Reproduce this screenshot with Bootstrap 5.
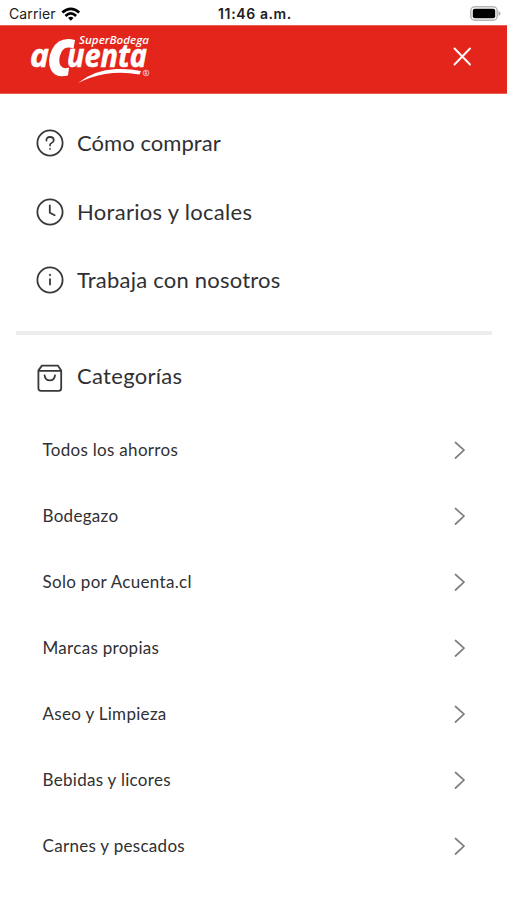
<!DOCTYPE html>
<html lang="es">
<head>
<meta charset="utf-8">
<meta name="viewport" content="width=device-width, initial-scale=1">
<title>aCuenta</title>
<link href="https://cdn.jsdelivr.net/npm/bootstrap@5.3.0/dist/css/bootstrap.min.css" rel="stylesheet">
<style>
body{font-family:Lato,"Noto Sans",sans-serif;color:#303033;background:#fff;height:900px;overflow:hidden}
svg{display:block;flex:none}
.status-bar{height:25px;font-family:Inter,"Liberation Sans",sans-serif;color:#202020;line-height:27px;padding:0 6px 0 9px;display:grid!important;grid-template-columns:1fr auto 1fr}
.carrier{font-size:14px;letter-spacing:.1px}
.clock{font-size:14px;font-weight:600;letter-spacing:.62px}
.brand-bar{height:69px;background:#e3251b;border-top:1px solid #ea5c54;border-bottom:1px solid #ea5c54;padding:0 34px 5px 28px}
.help-list{padding:15px 0 0 36px}
.help-row{height:68.5px}
.help-row,.cat-head{gap:13px;font-size:22px;line-height:30px}
.divider{height:4px;background:#ededed;margin:16px 15px 0 16px}
.cat-head{height:68px;margin:9px 0 -1px 36px}
.cat-head span{position:relative;top:-2px}
.cat-list{padding:6px 41.5px 0 42.5px}
.cat-row{height:66px;font-size:17px;letter-spacing:.3px}
.stroke{fill:none;stroke:#38383b;stroke-width:1.8;stroke-linecap:round;stroke-linejoin:round}
.chev{fill:none;stroke:#808083;stroke-width:1.7;stroke-linecap:round;stroke-linejoin:round}
</style>
<script src="https://cdn.jsdelivr.net/npm/bootstrap@5.3.0/dist/js/bootstrap.bundle.min.js"></script>
</head>
<body>
<div class="status-bar">
  <div class="d-flex align-items-center carrier"><span>Carrier</span>
    <svg class="ms-1" width="21" height="16" viewBox="0 0 21 16"><g transform="translate(1 1)" fill="none" stroke="#000" stroke-width="2.7"><path d="M1.4 5.6Q9.8-2 18.2 5.6"/><path d="M4.5 8.9Q9.8 4 15.1 8.9"/><path d="M7.1 11.1Q9.8 8.6 12.5 11.1L9.8 13.7Z" fill="#000" stroke="none"/></g></svg></div>
  <div class="clock">11:46 a.m.</div>
  <div class="d-flex align-items-center justify-content-end">
    <svg width="31" height="15" viewBox="0 0 31 15"><rect x=".8" y=".8" width="26.4" height="13.4" rx="4" fill="#fff" stroke="#b5b5b5" stroke-width="1.5"/><rect x="2.8" y="2.8" width="22.4" height="9.4" rx="2" fill="#000"/><path d="M28.5 5q2 .6 2 2.5t-2 2.5z" fill="#aaa"/></svg></div>
</div>
<header class="brand-bar d-flex align-items-center justify-content-between">
  <svg width="124" height="56" viewBox="28 29 124 56" fill="#fff" font-family="'Open Sans','Noto Sans',sans-serif" font-weight="700" font-style="italic">
    <text x="79" y="43.5" font-size="10.5" font-weight="600" textLength="70" lengthAdjust="spacingAndGlyphs">SuperBodega</text>
    <text x="30" y="67" font-size="32" font-weight="700" stroke="#fff" stroke-width=".5" textLength="19" lengthAdjust="spacingAndGlyphs">a</text>
    <path d="M75 40L73.500 48.500Q65 45.500 61.500 52Q57.500 60 60.500 65.500Q63 69.500 69 67.500L68 75.500Q56 78.500 51 70Q46.500 61 52 49.500Q59 36 75 40Z"/>
    <text x="67" y="67" font-size="32" font-weight="700" stroke="#fff" stroke-width=".6" textLength="80" lengthAdjust="spacingAndGlyphs">uenta</text>
    <path d="M78 83Q94 70 116 69Q130 68.500 141 71L139.500 74.500Q122 71.500 105 74Q91 76.500 78 83Z"/>
    <circle cx="146" cy="73" r="2.9" fill="none" stroke="#fff" stroke-width=".6"/>
    <text x="144.500" y="74.800" font-size="4.6" font-style="normal" font-weight="400">R</text>
  </svg>
  <svg width="22" height="22" viewBox="0 0 22 22"><path d="M3.500 2.500L19 18.500M19 2.500L3.500 18.500" stroke="#fff" stroke-width="1.9" stroke-linecap="round"/></svg>
</header>
<nav class="help-list">
  <div class="help-row d-flex align-items-center"><svg class="stroke" width="28" height="28" viewBox="0 0 28 28"><circle cx="14" cy="14" r="12.6"/><path d="M10.4 11.6Q10.3 8 14 8T17.7 11.2Q17.7 13.2 15.5 14Q14 14.500 14 16.4"/><circle cx="14" cy="20" r=".25"/></svg><span style="letter-spacing:.05px">Cómo comprar</span></div>
  <div class="help-row d-flex align-items-center"><svg class="stroke" width="28" height="28" viewBox="0 0 28 28"><circle cx="14" cy="14" r="12.6"/><path d="M13.8 7.500V14.700L18.700 17.2"/></svg><span style="letter-spacing:.3px">Horarios y locales</span></div>
  <div class="help-row d-flex align-items-center"><svg class="stroke" width="28" height="28" viewBox="0 0 28 28"><circle cx="14" cy="14" r="12.6"/><path d="M14 13.2V18.6"/><circle cx="14" cy="9" r=".3"/></svg><span style="letter-spacing:.22px">Trabaja con nosotros</span></div>
</nav>
<div class="divider"></div>
<div class="cat-head d-flex align-items-center"><svg class="stroke" width="28" height="28" viewBox="0 0 28 28"><path d="M2.4 6.4L6 1.6H21.8L25.2 6.4V24.2Q25.2 26.8 22.6 26.8H5Q2.4 26.8 2.4 24.2ZM2.4 6.8H25.2M8.6 11.3Q9.2 16.3 13.8 16.3T19 11.3"/></svg><span style="letter-spacing:.3px">Categorías</span></div>
<div class="cat-list">
  <div class="cat-row d-flex align-items-center justify-content-between"><span>Todos los ahorros</span><svg class="chev" width="12" height="18" viewBox="0 0 12 18"><path d="M1.500 1.500L10 9.2L1.500 17"/></svg></div>
  <div class="cat-row d-flex align-items-center justify-content-between"><span>Bodegazo</span><svg class="chev" width="12" height="18" viewBox="0 0 12 18"><path d="M1.500 1.500L10 9.2L1.500 17"/></svg></div>
  <div class="cat-row d-flex align-items-center justify-content-between"><span>Solo por Acuenta.cl</span><svg class="chev" width="12" height="18" viewBox="0 0 12 18"><path d="M1.500 1.500L10 9.2L1.500 17"/></svg></div>
  <div class="cat-row d-flex align-items-center justify-content-between"><span>Marcas propias</span><svg class="chev" width="12" height="18" viewBox="0 0 12 18"><path d="M1.500 1.500L10 9.2L1.500 17"/></svg></div>
  <div class="cat-row d-flex align-items-center justify-content-between"><span>Aseo y Limpieza</span><svg class="chev" width="12" height="18" viewBox="0 0 12 18"><path d="M1.500 1.500L10 9.2L1.500 17"/></svg></div>
  <div class="cat-row d-flex align-items-center justify-content-between"><span>Bebidas y licores</span><svg class="chev" width="12" height="18" viewBox="0 0 12 18"><path d="M1.500 1.500L10 9.2L1.500 17"/></svg></div>
  <div class="cat-row d-flex align-items-center justify-content-between"><span>Carnes y pescados</span><svg class="chev" width="12" height="18" viewBox="0 0 12 18"><path d="M1.500 1.500L10 9.2L1.500 17"/></svg></div>
</div>
</body>
</html>
